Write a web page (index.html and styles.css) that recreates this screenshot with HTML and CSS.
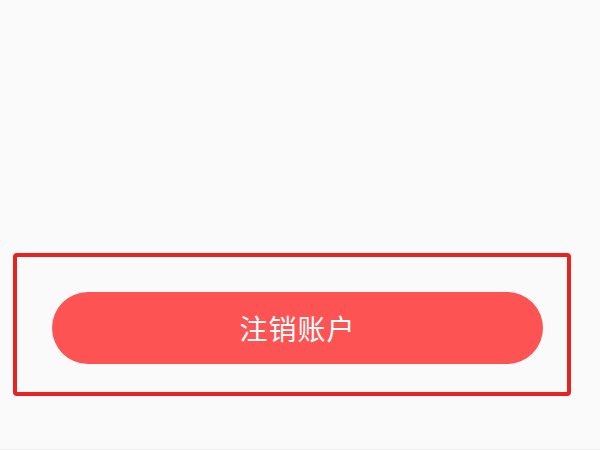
FILE: index.html
```html
<!DOCTYPE html>
<html lang="zh-CN">
<head>
<meta charset="utf-8">
<link rel="stylesheet" href="styles.css">
</head>
<body>
<div class="page">
  <div class="highlight">
    <button class="cancel-btn">注销账户</button>
  </div>
</div>
</body>
</html>
```
FILE: styles.css
```css
html, body {
  margin: 0;
  padding: 0;
  background: #fafafa;
}
.page {
  width: 600px;
  height: 450px;
  box-sizing: border-box;
  padding-top: 253px;
  padding-left: 13px;
  border-bottom: 1px solid #ececec;
}
.highlight {
  width: 558px;
  height: 143px;
  box-sizing: border-box;
  border: 4px solid #e8221c;
  border-radius: 4px;
  padding: 35px 24px 28px 35px;
}
.cancel-btn {
  display: flex;
  align-items: center;
  justify-content: center;
  width: 491px;
  height: 72px;
  border: none;
  border-radius: 36px;
  background: #fd5353;
  color: #ffffff;
  font-family: "Noto Sans CJK SC", "Noto Sans", sans-serif;
  font-size: 28px;
  letter-spacing: 1px;
  padding: 0;
  margin: 0;
}
```
